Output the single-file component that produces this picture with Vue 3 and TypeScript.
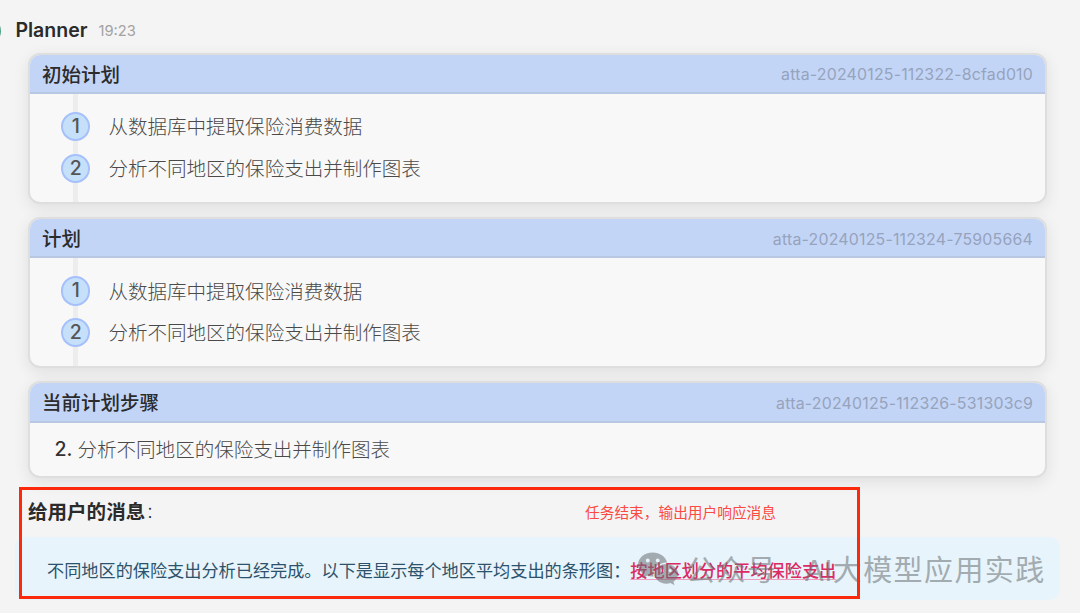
<script setup lang="ts">
interface Attachment {
  title: string
  id: string
  steps: string[]
  start?: number
}

const attachments: Attachment[] = [
  {
    title: '初始计划',
    id: 'atta-20240125-112322-8cfad010',
    steps: ['从数据库中提取保险消费数据', '分析不同地区的保险支出并制作图表'],
  },
  {
    title: '计划',
    id: 'atta-20240125-112324-75905664',
    steps: ['从数据库中提取保险消费数据', '分析不同地区的保险支出并制作图表'],
  },
  {
    title: '当前计划步骤',
    id: 'atta-20240125-112326-531303c9',
    steps: ['分析不同地区的保险支出并制作图表'],
    start: 2,
  },
]
</script>

<template>
  <main class="chat">
    <span class="avatar"></span>
    <header class="author">
      <strong class="name">Planner</strong>
      <time class="time">19:23</time>
    </header>

    <section class="cards">
      <article v-for="a in attachments" :key="a.id" class="card">
        <div class="card-head">
          <h2 class="card-title">{{ a.title }}</h2>
          <span class="card-id">{{ a.id }}</span>
        </div>
        <p v-if="a.start" class="current">
          <span class="current-no">{{ a.start }}.</span>
          <span class="step-text">{{ a.steps[0] }}</span>
        </p>
        <ol v-else class="steps">
          <li v-for="(s, i) in a.steps" :key="i" class="step">
            <span class="badge">{{ i + 1 }}</span>
            <span class="step-text">{{ s }}</span>
          </li>
        </ol>
      </article>
    </section>

    <div class="label"><strong>给用户的消息</strong><span class="colon">:</span></div>
    <div class="message">
      <span>不同地区的保险支出分析已经完成。以下是显示每个地区平均支出的条形图：</span><a class="link">按地区划分的平均保险支出</a>
    </div>

    <div class="watermark">
      <svg class="wechat" viewBox="0 0 42 36">
        <path
          fill-rule="evenodd"
          d="M15 1C6.700 1 0 6.600 0 13.500c0 3.900 2.200 7.400 5.600 9.700L4.200 27.500l5-2.600c1.800.5 3.800.8 5.900.8h.9A11 11 0 0 1 15.600 23c0-6.500 6.100-11.700 13.700-11.700h.5C28.400 5.400 22.300 1 15 1ZM10 7.300a2 2 0 1 1 0 4 2 2 0 0 1 0-4Zm10.200 0a2 2 0 1 1 0 4 2 2 0 0 1 0-4Z"
        />
        <path
          fill-rule="evenodd"
          d="M29 12.800c-6.800 0-12 4.500-12 10.100s5.200 10.100 12 10.100c1.500 0 3-.2 4.300-.6l4.100 2.200-1.100-3.600c2.900-1.900 4.700-4.800 4.700-8.100 0-5.600-5.200-10.100-12-10.100Zm-4 5.200a1.600 1.600 0 1 1 0 3.200 1.600 1.600 0 0 1 0-3.200Zm8 0a1.600 1.600 0 1 1 0 3.200 1.600 1.600 0 0 1 0-3.200Z"
        />
      </svg>
      <span class="wm-kind">公众号</span>
      <span class="wm-dot">·</span>
      <span class="wm-name"><span class="wm-latin">AI</span>大模型应用实践</span>
    </div>
    <div class="callout"><span class="callout-text">任务结束，输出用户响应消息</span></div>
  </main>
</template>

<style>
body {
  margin: 0;
  background: #f4f4f4;
}
</style>

<style scoped>
.chat {
  position: relative;
  box-sizing: border-box;
  width: 1080px;
  height: 613px;
  padding-top: 15px;
  overflow: hidden;
  background: #f4f4f4;
  color: #2b2b2b;
  font-family: Inter, 'Noto Sans CJK SC', sans-serif;
  font-size: 19.55px;
}
.avatar {
  position: absolute;
  left: -27px;
  top: 17px;
  width: 28px;
  height: 28px;
  border-radius: 50%;
  background: #4fa383;
}
.author {
  display: flex;
  align-items: center;
  gap: 11px;
  height: 30px;
  padding-left: 15.400px;
}
.name {
  font-size: 19.55px;
  font-weight: 600;
}
.time {
  padding-top: 1px;
  font-size: 14.7px;
  color: #a2a2a2;
}
.cards {
  display: flex;
  flex-direction: column;
  gap: 13px;
  margin: 7.500px 33px 0 28px;
}
.card {
  box-sizing: border-box;
  height: 151.3px;
  border: 2px solid #dedede;
  border-radius: 12px;
  background: #f8f8f8;
  box-shadow: 0 4px 16px rgba(0, 0, 0, 0.09);
  overflow: hidden;
}
.card:last-child {
  height: 96.500px;
}
.card-head {
  box-sizing: border-box;
  display: flex;
  align-items: center;
  justify-content: space-between;
  height: 39.500px;
  padding: 3px 12px 0;
  border-bottom: 2px solid #b9c8e2;
  background: #c3d5f7;
}
.card-title {
  margin: 0;
  font-size: 19.5px;
  line-height: 28px;
  font-weight: 500;
}
.card-id {
  font-size: 15.9px;
  letter-spacing: 0.2px;
  color: #96a3bc;
}
.steps {
  box-sizing: border-box;
  display: flex;
  flex-direction: column;
  gap: 12.400px;
  height: 108px;
  margin: 0;
  padding: 18px 0 0 31px;
  list-style: none;
  background: linear-gradient(#ededed, #ededed) 43px 0 / 5px 100% no-repeat;
}
.step {
  display: flex;
  align-items: center;
  gap: 18px;
  height: 29.400px;
  font-weight: 300;
  color: #4a4a4a;
}
.step-text {
  padding-bottom: 2px;
}
.badge {
  box-sizing: border-box;
  width: 29.400px;
  height: 29.400px;
  border: 2px solid #a5c0fb;
  border-radius: 50%;
  background: #c6e0fa;
  font-size: 19.500px;
  line-height: 25.500px;
  font-weight: 500;
  text-align: center;
  color: #555;
}
.current {
  display: flex;
  align-items: center;
  gap: 5px;
  height: 53px;
  margin: 0;
  padding-left: 24.500px;
  font-weight: 300;
  color: #4a4a4a;
}
.current-no {
  font-weight: 500;
  color: #333;
}
.label {
  display: flex;
  align-items: center;
  height: 30px;
  margin-top: 18px;
  padding-left: 28px;
}
.label strong {
  font-weight: 700;
}
.colon {
  margin-left: 2px;
  font-weight: 300;
}
.message {
  box-sizing: border-box;
  display: flex;
  align-items: center;
  height: 63px;
  margin: 11px 20px 0 15px;
  padding: 2px 0 0 32px;
  border-radius: 10px;
  background: #e7f4fb;
  color: #2c526c;
  font-size: 17.160px;
  white-space: nowrap;
}
.link {
  color: #dc2a62;
  font-weight: 500;
  text-decoration: underline;
  text-decoration-thickness: 1px;
  text-underline-offset: 2px;
  text-decoration-color: #eda0bd;
}
.watermark {
  position: absolute;
  left: 638px;
  top: 549px;
  display: flex;
  align-items: center;
  height: 38px;
  color: #6b7073;
  opacity: 0.55;
  font-size: 29px;
  letter-spacing: 1.4px;
  white-space: nowrap;
}
.wechat {
  width: 41px;
  height: 36px;
  margin-top: 2px;
  fill: currentColor;
}
.wm-kind {
  margin-left: 7px;
}
.wm-dot {
  width: 27px;
  text-align: center;
}
.wm-latin {
  letter-spacing: 0.4px;
}
.callout {
  position: absolute;
  left: 19px;
  top: 487px;
  box-sizing: border-box;
  width: 841px;
  height: 112px;
  border: 3px solid #fc2a0c;
}
.callout-text {
  position: absolute;
  left: 563px;
  top: 12px;
  font-size: 14.700px;
  line-height: 22px;
  color: #fb4a3e;
  white-space: nowrap;
}
</style>
